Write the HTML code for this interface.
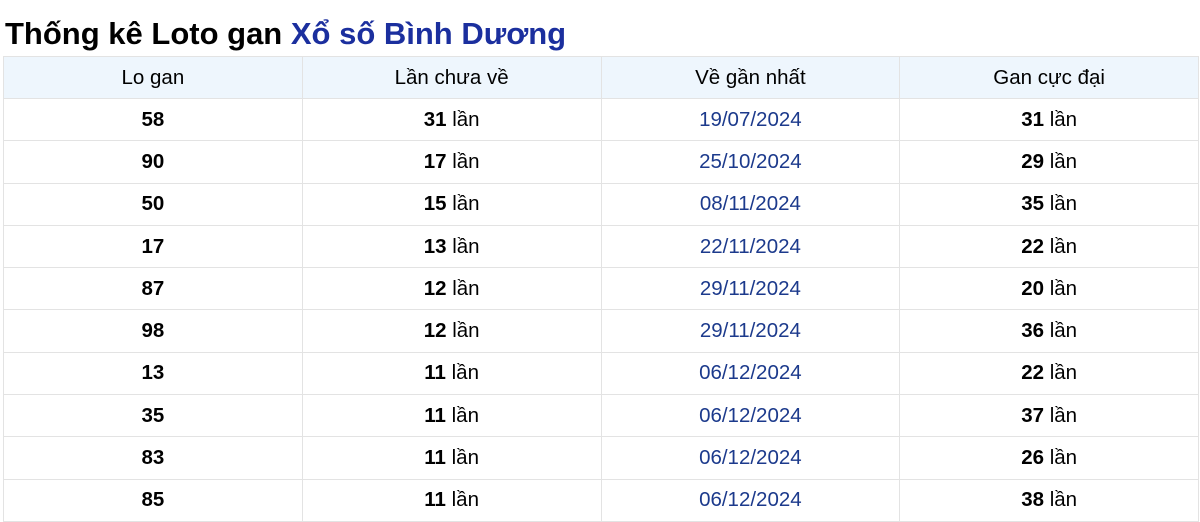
<!DOCTYPE html>
<html><head><meta charset="utf-8"><style>
body{margin:0;background:#fff;font-family:"Liberation Sans",Arial,sans-serif;width:1200px;height:521px;overflow:hidden}
h1{margin:0;position:absolute;left:5px;top:14px;font-size:31px;line-height:40px;font-weight:bold;color:#000;white-space:nowrap}
h1 span{color:#1b2f9e}
table{position:absolute;left:3px;top:56px;width:1196px;border-collapse:collapse;table-layout:fixed}
td,th{border:1px solid #e3e3e3;text-align:center;font-size:20.5px;height:41.3px;padding:0;color:#000}
th{background:#eef6fd;font-weight:normal;height:41px}
td b{font-weight:bold}
td.d{color:#1c3a8c}
</style></head><body>
<h1>Thống kê Loto gan <span>Xổ số Bình Dương</span></h1>
<table>
<tr><th>Lo gan</th><th>Lần chưa về</th><th>Về gần nhất</th><th>Gan cực đại</th></tr>
<tr><td><b>58</b></td><td><b>31</b> lần</td><td class="d">19/07/2024</td><td><b>31</b> lần</td></tr>
<tr><td><b>90</b></td><td><b>17</b> lần</td><td class="d">25/10/2024</td><td><b>29</b> lần</td></tr>
<tr><td><b>50</b></td><td><b>15</b> lần</td><td class="d">08/11/2024</td><td><b>35</b> lần</td></tr>
<tr><td><b>17</b></td><td><b>13</b> lần</td><td class="d">22/11/2024</td><td><b>22</b> lần</td></tr>
<tr><td><b>87</b></td><td><b>12</b> lần</td><td class="d">29/11/2024</td><td><b>20</b> lần</td></tr>
<tr><td><b>98</b></td><td><b>12</b> lần</td><td class="d">29/11/2024</td><td><b>36</b> lần</td></tr>
<tr><td><b>13</b></td><td><b>11</b> lần</td><td class="d">06/12/2024</td><td><b>22</b> lần</td></tr>
<tr><td><b>35</b></td><td><b>11</b> lần</td><td class="d">06/12/2024</td><td><b>37</b> lần</td></tr>
<tr><td><b>83</b></td><td><b>11</b> lần</td><td class="d">06/12/2024</td><td><b>26</b> lần</td></tr>
<tr><td><b>85</b></td><td><b>11</b> lần</td><td class="d">06/12/2024</td><td><b>38</b> lần</td></tr>
</table>
</body></html>
